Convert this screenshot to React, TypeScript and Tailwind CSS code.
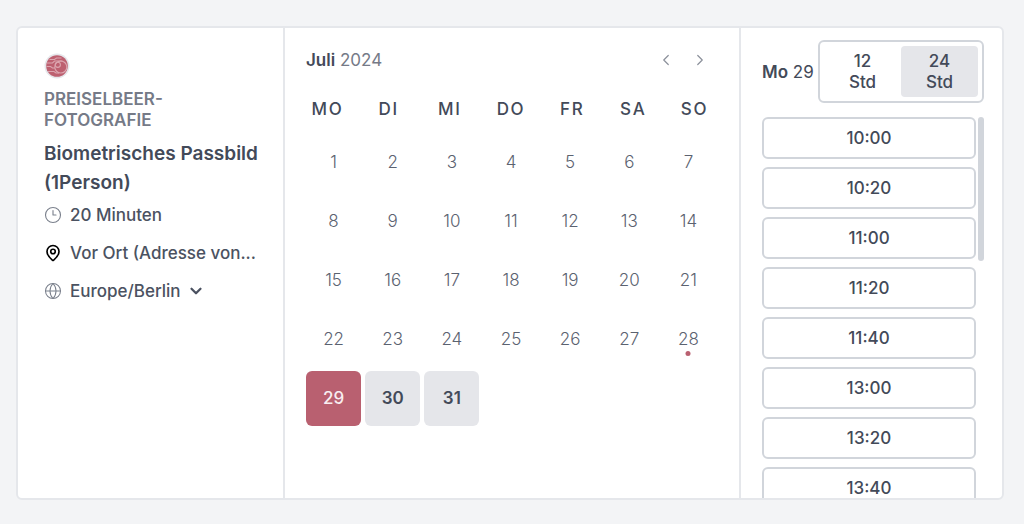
import { useState } from "react";
import { ChevronDown, ChevronLeft, ChevronRight, Clock3, Globe, MapPin } from "lucide-react";
import clsx from "clsx";

const WEEKDAYS = ["MO", "DI", "MI", "DO", "FR", "SA", "SO"];
const DAYS = Array.from({ length: 31 }, (_, i) => i + 1);
const AVAILABLE = [29, 30, 31];
const TODAY = 28;
const SLOTS = ["10:00", "10:20", "11:00", "11:20", "11:40", "13:00", "13:20", "13:40"];

function Logo() {
  return (
    <svg viewBox="0 0 26 26" className="size-[26px]" role="img" aria-label="Preiselbeer-Fotografie">
      <circle cx="13" cy="13" r="12.5" fill="#e5e7eb" />
      <circle cx="13" cy="13" r="10.8" fill="#bd6070" />
      <g fill="none" stroke="#dca5af" strokeWidth="1.1">
        <circle cx="16.8" cy="14" r="6" />
        <circle cx="13.800" cy="11.8" r="2.6" />
        <path d="M5.500 6.500h5l2-1.500h5M3 10h5.500l2-2h8M2.500 13.500h4l2 1.500h2.500M4 18.500h6l2 1.500h3" />
      </g>
    </svg>
  );
}

function EventInfo() {
  return (
    <aside className="border-r-2 border-[#e5e7eb] pt-[25px] pr-5 pl-[26px]">
      <Logo />
      <p className="mt-[10px] text-[17px] leading-[21px] font-semibold text-[#757a87]">
        PREISELBEER-
        <br />
        FOTOGRAFIE
      </p>
      <h1 className="mt-2 text-[19px] leading-[29px] font-semibold text-[#434a59]">
        Biometrisches Passbild (1Person)
      </h1>
      <div className="mt-[6px] flex flex-col gap-[14px] text-[17px] leading-6 font-medium text-[#4b5261]">
        <div className="flex items-center gap-2">
          <Clock3 size={18} strokeWidth={1.5} className="shrink-0 text-[#7b818d]" />
          <span>20 Minuten</span>
        </div>
        <div className="flex items-center gap-2">
          <MapPin size={18} strokeWidth={2.2} className="shrink-0 text-black" />
          <span className="whitespace-nowrap">Vor Ort (Adresse von...</span>
        </div>
        <div className="flex items-center gap-2">
          <Globe size={18} strokeWidth={1.4} className="shrink-0 text-[#7b818d]" />
          <div className="flex items-center gap-[6px]">
            <select aria-label="Zeitzone" className="field-sizing-content appearance-none bg-transparent outline-none">
              <option>Europe/Berlin</option>
            </select>
            <ChevronDown size={18} strokeWidth={3} className="shrink-0" />
          </div>
        </div>
      </div>
    </aside>
  );
}

interface CalendarProps {
  selected: number;
  onSelect: (day: number) => void;
}

function Calendar({ selected, onSelect }: CalendarProps) {
  return (
    <section className="border-r-2 border-[#e5e7eb] pt-5 pr-[23px] pl-[21px]">
      <div className="flex items-center justify-between">
        <h2 className="text-[17px] leading-6 text-[#757a87]">
          <span className="font-semibold text-[#434a59]">Juli</span> 2024
        </h2>
        <div className="flex gap-4 pr-[7px] text-[#8b909b]">
          <button aria-label="Vorheriger Monat">
            <ChevronLeft size={18} strokeWidth={1.6} />
          </button>
          <button aria-label="Nächster Monat">
            <ChevronRight size={18} strokeWidth={1.6} />
          </button>
        </div>
      </div>
      <div className="-mx-[9px] mt-[25px] grid grid-cols-7 text-center text-[17px] leading-6 font-medium tracking-widest text-[#434a59]">
        {WEEKDAYS.map((name) => (
          <div key={name}>{name}</div>
        ))}
      </div>
      <div className="mt-[13px] grid grid-cols-7 gap-1 text-[17px] leading-6">
        {DAYS.map((day) => (
          <button
            key={day}
            disabled={!AVAILABLE.includes(day)}
            onClick={() => onSelect(day)}
            className={clsx(
              "relative flex aspect-square items-center justify-center rounded-md",
              day === selected && "bg-[#b96070] font-medium text-[#f8eef0]",
              day !== selected && AVAILABLE.includes(day) && "bg-[#e5e6ea] font-semibold text-[#434a59]",
              !AVAILABLE.includes(day) && "font-light text-[#5b6270]",
            )}
          >
            {day}
            {day === TODAY && (
              <span className="absolute bottom-[11px] left-1/2 size-[5px] -translate-x-1/2 rounded-full bg-[#b96070]" />
            )}
          </button>
        ))}
      </div>
    </section>
  );
}

function TimeSlots({ day }: { day: number }) {
  const [format, setFormat] = useState("24");

  return (
    <section className="flex min-h-0 flex-col pt-3 pr-[18px] pl-[21px] text-[#434a59]">
      <div className="flex items-center justify-between">
        <h2 className="text-[17px] leading-6 whitespace-nowrap">
          <span className="font-semibold">Mo</span> <span>{day}</span>
        </h2>
        <div className="flex w-[166px] rounded-md border-2 border-[#d1d5db] p-1">
          {["12", "24"].map((hours) => (
            <button
              key={hours}
              aria-pressed={format === hours}
              onClick={() => setFormat(hours)}
              className={clsx(
                "flex-1 rounded-sm px-6 pt-[5px] pb-1 text-[17px] leading-[21px] font-medium",
                format === hours && "bg-[#e5e6ea]",
              )}
            >
              {hours} Std
            </button>
          ))}
        </div>
      </div>
      <div className="mt-[14px] flex min-h-0 flex-1 gap-[2px]">
        <div className="flex min-w-0 flex-1 flex-col gap-2 overflow-y-auto [scrollbar-width:none]">
          {SLOTS.map((slot) => (
            <button
              key={slot}
              className="h-[42px] shrink-0 rounded-md border-2 border-[#d1d5db] text-[17px] leading-6 font-medium"
            >
              {slot}
            </button>
          ))}
        </div>
        <div className="h-36 w-[6px] rounded-sm bg-[#d1d5db]" />
      </div>
    </section>
  );
}

export default function App() {
  const [selected, setSelected] = useState(29);

  return (
    <main className="flex h-screen bg-[#f3f4f6] pt-[26px] pr-5 pb-6 pl-4 font-['Inter',sans-serif]">
      <div className="grid min-w-0 flex-1 grid-cols-[267px_minmax(0,1fr)_261px] grid-rows-[minmax(0,1fr)] overflow-hidden rounded-md border-2 border-[#e5e7eb] bg-white">
        <EventInfo />
        <Calendar selected={selected} onSelect={setSelected} />
        <TimeSlots day={selected} />
      </div>
    </main>
  );
}
